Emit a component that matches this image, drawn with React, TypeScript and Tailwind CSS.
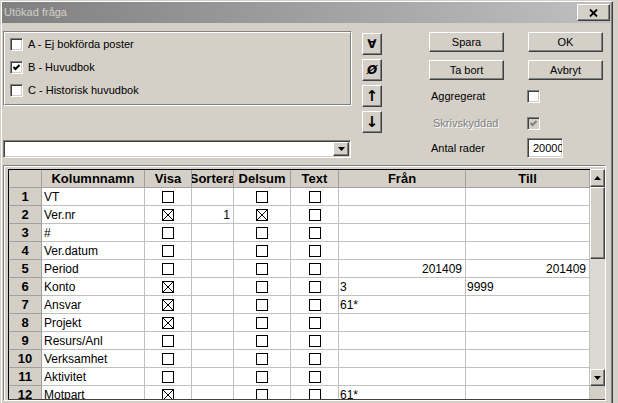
import React from "react";

type Row = {
  n: number;
  name: string;
  visa?: boolean;
  sort?: string;
  delsum?: boolean;
  fran?: string;
  franRight?: boolean;
  till?: string;
  tillRight?: boolean;
};

const rows: Row[] = [
  { n: 1, name: "VT" },
  { n: 2, name: "Ver.nr", visa: true, sort: "1", delsum: true },
  { n: 3, name: "#" },
  { n: 4, name: "Ver.datum" },
  { n: 5, name: "Period", fran: "201409", franRight: true, till: "201409", tillRight: true },
  { n: 6, name: "Konto", visa: true, fran: "3", till: "9999" },
  { n: 7, name: "Ansvar", visa: true, fran: "61*" },
  { n: 8, name: "Projekt", visa: true },
  { n: 9, name: "Resurs/Anl" },
  { n: 10, name: "Verksamhet" },
  { n: 11, name: "Aktivitet" },
  { n: 12, name: "Motpart", visa: true, fran: "61*" },
];

const raised =
  "border border-t-white border-l-white border-r-[#404040] border-b-[#404040] shadow-[inset_-1px_-1px_0_#808080] bg-[#d4d0c8]";
const sunken =
  "border border-t-[#808080] border-l-[#808080] border-r-white border-b-white shadow-[inset_1px_1px_0_#404040,inset_-1px_-1px_0_#d4d0c8]";

function WinCheck({ checked, disabled }: { checked?: boolean; disabled?: boolean }) {
  return (
    <div
      className={`w-[13px] h-[13px] flex items-center justify-center ${sunken} ${
        disabled ? "bg-[#d4d0c8]" : "bg-white"
      }`}
    >
      {checked && (
        <svg width="7" height="7" viewBox="0 0 7 7">
          <polyline
            points="0.5,3 2.5,5 6.5,1"
            fill="none"
            stroke={disabled ? "#808080" : "#000"}
            strokeWidth="2"
          />
        </svg>
      )}
    </div>
  );
}

function CellCheck({ on }: { on?: boolean }) {
  return (
    <svg width="12" height="12" viewBox="0 0 12 12">
      <rect x="0.5" y="0.5" width="11" height="11" fill="white" stroke="black" />
      {on && <path d="M1 1L11 11M11 1L1 11" stroke="black" />}
    </svg>
  );
}

function Arrow({ down }: { down?: boolean }) {
  return (
    <svg width="7" height="4" viewBox="0 0 7 4">
      <path d={down ? "M0 0H7L3.5 4Z" : "M0 4H7L3.5 0Z"} fill="black" />
    </svg>
  );
}

function WinButton({ label, w }: { label: string; w: string }) {
  return (
    <div className={`${w} h-[20px] flex items-center justify-center text-[11px] text-black ${raised}`}>
      {label}
    </div>
  );
}

const hdr = "bg-[#d4d0c8] border-r border-b border-[#a0a0a0] flex items-center justify-center font-bold text-[13px] overflow-hidden whitespace-nowrap";
const cell = "bg-white border-r border-b border-[#c0c0c0] flex items-center overflow-hidden whitespace-nowrap";

export default function App() {
  return (
    <div className="w-[618px] h-[403px] overflow-hidden bg-[#d4d0c8] font-['Liberation_Sans',Arial,sans-serif] text-black">
      <div className="ml-[1px] mt-[1px] w-[612px] h-[402px] border-l border-t border-white border-r border-r-[#404040] shadow-[inset_-1px_0_0_#808080] flex flex-col">
        {/* title bar */}
        <div className="mr-[1px] h-[21px] shrink-0 bg-linear-to-r from-[#808080] to-[#c0c0c0] flex items-center justify-between pl-[2px] pr-[1px]">
          <span className="text-[11px] text-[#d4d0c8]">Utökad fråga</span>
          <div className={`w-[33px] h-[17px] flex items-center justify-center ${raised}`}>
            <svg width="9" height="8" viewBox="0 0 9 8">
              <path d="M1 0.5L8 7.5M8 0.5L1 7.5" stroke="black" strokeWidth="1.8" />
            </svg>
          </div>
        </div>

        {/* top section */}
        <div className="flex items-start pt-[8px] pl-[1px] shrink-0">
          <div className="w-[349px] flex flex-col">
            <div className="h-[75px] border border-t-[#808080] border-l-[#808080] border-r-white border-b-white">
              <div className="h-full border border-t-white border-l-white border-r-[#808080] border-b-[#808080] pl-[5px] pt-[5px] flex flex-col gap-[10px]">
                {[
                  { t: "A - Ej bokförda poster", c: false },
                  { t: "B - Huvudbok", c: true },
                  { t: "C - Historisk huvudbok", c: false },
                ].map((o) => (
                  <div key={o.t} className="h-[13px] flex items-center gap-[5px] text-[11px]">
                    <WinCheck checked={o.c} />
                    <span>{o.t}</span>
                  </div>
                ))}
              </div>
            </div>
            <div className={`mt-[34px] w-[348px] h-[18px] bg-white flex justify-end items-center pr-[1px] ${sunken}`}>
              <div className={`w-[16px] h-[14px] flex items-center justify-center ${raised}`}>
                <Arrow down />
              </div>
            </div>
          </div>

          <div className="ml-[10px] pt-[2px] flex flex-col gap-[4px] font-['DejaVu_Sans',sans-serif] font-bold">
            {[
              { g: "∀", s: "text-[12px]" },
              { g: "Ø", s: "text-[12px] italic" },
              { g: "↑", s: "text-[15px]" },
              { g: "↓", s: "text-[15px]" },
            ].map((b) => (
              <div key={b.g} className={`w-[20px] h-[22px] flex items-center justify-center ${b.s} ${raised}`}>
                {b.g}
              </div>
            ))}
          </div>

          <div className="ml-[47px] pt-[1px] flex flex-col text-[11px]">
            <div className="flex gap-[24px]">
              <WinButton label="Spara" w="w-[75px]" />
              <WinButton label="OK" w="w-[75px]" />
            </div>
            <div className="flex gap-[24px] mt-[8px]">
              <WinButton label="Ta bort" w="w-[75px]" />
              <WinButton label="Avbryt" w="w-[75px]" />
            </div>
            <div className="flex items-center h-[13px] mt-[10px]">
              <span className="w-[98px] pl-[2px]">Aggregerat</span>
              <WinCheck />
            </div>
            <div className="flex items-center h-[13px] mt-[14px]">
              <span className="w-[98px] pl-[4px] text-[#808080] [text-shadow:1px_1px_0_#ffffff]">Skrivskyddad</span>
              <WinCheck checked disabled />
            </div>
            <div className="flex items-center h-[20px] mt-[8px]">
              <span className="w-[98px] pl-[2px]">Antal rader</span>
              <div className={`w-[36px] h-[20px] bg-white overflow-hidden whitespace-nowrap flex items-center pl-[5px] ${sunken}`}>
                20000
              </div>
            </div>
          </div>
        </div>

        {/* grid */}
        <div className="mt-[7px] ml-[1px] w-[603px] h-[236px] shrink-0 border border-t-[#808080] border-l-[#808080] border-r-white border-b-white shadow-[inset_1px_1px_0_#ffffff] pt-[3px] pl-[4px]">
          <div className="h-[231px] flex overflow-hidden border-b border-[#404040]">
            <div className="w-[582px] border-t border-l border-black text-[12px] grid grid-cols-[33px_103px_47px_42px_57px_48px_127px_124px] auto-rows-[18px] content-start">
              <div className={hdr}></div>
              <div className={hdr}>Kolumnnamn</div>
              <div className={hdr}>Visa</div>
              <div className={hdr}>Sortera</div>
              <div className={hdr}>Delsum</div>
              <div className={hdr}>Text</div>
              <div className={hdr}>Från</div>
              <div className={hdr}>Till</div>
              {rows.map((r) => (
                <React.Fragment key={r.n}>
                  <div className={hdr}>{r.n}</div>
                  <div className={`${cell} pl-[2px]`}>{r.name}</div>
                  <div className={`${cell} justify-center`}>
                    <CellCheck on={r.visa} />
                  </div>
                  <div className={`${cell} justify-end pr-[3px]`}>{r.sort}</div>
                  <div className={`${cell} justify-center`}>
                    <CellCheck on={r.delsum} />
                  </div>
                  <div className={`${cell} justify-center`}>
                    <CellCheck />
                  </div>
                  <div className={`${cell} ${r.franRight ? "justify-end pr-[3px]" : "pl-[1px]"}`}>{r.fran}</div>
                  <div className={`${cell} ${r.tillRight ? "justify-end pr-[3px]" : "pl-[1px]"}`}>{r.till}</div>
                </React.Fragment>
              ))}
            </div>

            <div className="w-[15px] flex flex-col">
              <div className={`h-[18px] shrink-0 flex items-center justify-center ${raised}`}>
                <Arrow />
              </div>
              <div className={`h-[72px] shrink-0 ${raised}`}></div>
              <div className="flex-1 bg-[#dcd9d3]"></div>
              <div className={`h-[17px] shrink-0 flex items-center justify-center ${raised}`}>
                <Arrow down />
              </div>
              <div className="h-[13px] shrink-0 bg-[#d4d0c8]"></div>
            </div>
          </div>
        </div>
      </div>
    </div>
  );
}
